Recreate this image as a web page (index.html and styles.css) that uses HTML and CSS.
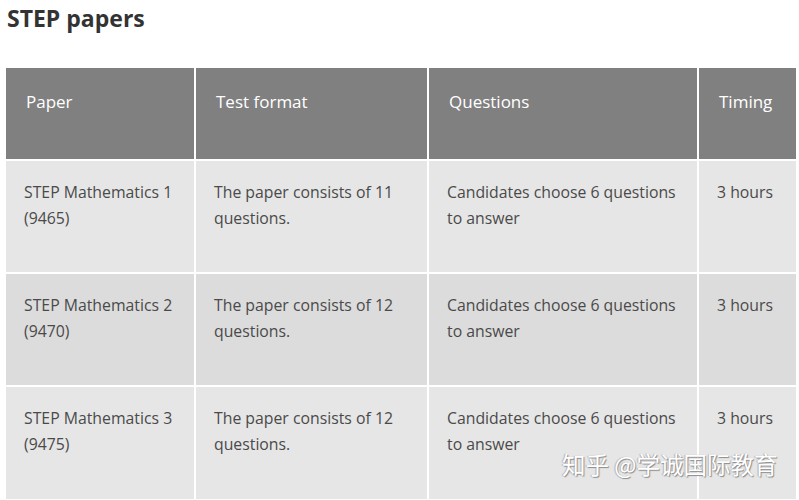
FILE: index.html
```html
<!DOCTYPE html>
<html lang="en">
<head>
<meta charset="utf-8">
<title>STEP papers</title>
<link rel="stylesheet" href="styles.css">
</head>
<body>
<div class="page">
  <h2 class="title">STEP papers</h2>
  <div class="table">
    <div class="cell head">Paper</div>
    <div class="cell head">Test format</div>
    <div class="cell head">Questions</div>
    <div class="cell head">Timing</div>

    <div class="cell light">STEP Mathematics 1 (9465)</div>
    <div class="cell light">The paper consists of 11 questions.</div>
    <div class="cell light">Candidates choose 6 questions to answer</div>
    <div class="cell light">3 hours</div>

    <div class="cell dark">STEP Mathematics 2 (9470)</div>
    <div class="cell dark">The paper consists of 12 questions.</div>
    <div class="cell dark">Candidates choose 6 questions to answer</div>
    <div class="cell dark">3 hours</div>

    <div class="cell light">STEP Mathematics 3 (9475)</div>
    <div class="cell light">The paper consists of 12 questions.</div>
    <div class="cell light">Candidates choose 6 questions to answer</div>
    <div class="cell light">3 hours</div>
  </div>
  <div class="watermark">知乎 @学诚国际教育</div>
</div>
</body>
</html>
```
FILE: styles.css
```css
html, body {
  margin: 0;
  padding: 0;
  background: #ffffff;
}
body {
  font-family: "Open Sans", "Noto Sans", "Noto Sans CJK SC", sans-serif;
  color: #4a4a4a;
}
.page {
  position: relative;
  width: 799px;
  height: 500px;
  overflow: hidden;
}
.title {
  margin: 0;
  padding: 2px 0 0 7px;
  height: 68px;
  box-sizing: border-box;
  font-size: 23px;
  font-weight: 700;
  line-height: 32px;
  color: #333333;
}
.table {
  display: grid;
  grid-template-columns: 188px 231px 268px 97px;
  grid-template-rows: 91px 111px 111px 112px;
  gap: 2px;
  margin-left: 6px;
}
.cell {
  box-sizing: border-box;
  font-size: 15.8px;
  line-height: 26px;
  padding: 18px 12px 0 18px;
}
.head {
  background: #808080;
  color: #ffffff;
  font-size: 17px;
  padding: 21px 12px 0 20px;
}
.light {
  background: #e6e6e6;
}
.dark {
  background: #dcdcdc;
}
.watermark {
  position: absolute;
  left: 562px;
  top: 448px;
  font-family: "Noto Sans CJK SC", sans-serif;
  font-size: 23.5px;
  line-height: 32px;
  color: #ffffff;
  text-shadow: 1px 1px 1px #8a8a8a, -1px 0 1px #b0b0b0;
}
```
